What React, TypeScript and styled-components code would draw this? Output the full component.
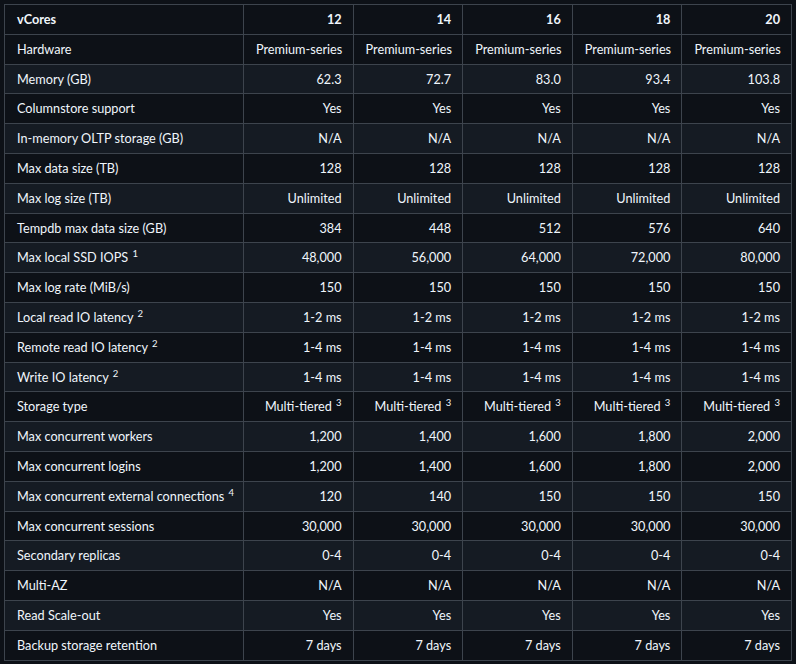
import React from "react";
import styled, { createGlobalStyle } from "styled-components";

const GlobalStyle = createGlobalStyle`
  html, body {
    margin: 0;
    padding: 0;
    background: #0d1117;
  }
  body {
    padding: 4px 5px 4px 4px;
    font-family: Lato, "Noto Sans", sans-serif;
    color: #f0f6fc;
  }
`;

const Table = styled.table`
  width: 788px;
  border-collapse: collapse;
  border-spacing: 0;
  table-layout: fixed;
  font-size: 12.7px;
  line-height: 18.8px;
`;

const Row = styled.tr`
  background: #0d1117;
  &:nth-child(2n) {
    background: #151b23;
  }
`;

const HeadCell = styled.th<{ $first?: boolean }>`
  border: 1px solid #3d444d;
  padding: 5px 11px 5px 12px;
  font-weight: 700;
  text-align: ${(p) => (p.$first ? "left" : "right")};
  white-space: nowrap;
`;

const Cell = styled.td<{ $first?: boolean }>`
  border: 1px solid #3d444d;
  padding: 5px 11px 5px 12px;
  text-align: ${(p) => (p.$first ? "left" : "right")};
  white-space: nowrap;
`;

const Sup = styled.sup`
  font-size: 9.5px;
  line-height: 0;
  vertical-align: 5px;
  margin-left: 1px;
`;

type Val = string | [string, string];

const vcores = ["12", "14", "16", "18", "20"];

const rows: { label: string; note?: string; values: Val[] }[] = [
  { label: "Hardware", values: Array(5).fill("Premium-series") },
  { label: "Memory (GB)", values: ["62.3", "72.7", "83.0", "93.4", "103.8"] },
  { label: "Columnstore support", values: Array(5).fill("Yes") },
  { label: "In-memory OLTP storage (GB)", values: Array(5).fill("N/A") },
  { label: "Max data size (TB)", values: Array(5).fill("128") },
  { label: "Max log size (TB)", values: Array(5).fill("Unlimited") },
  { label: "Tempdb max data size (GB)", values: ["384", "448", "512", "576", "640"] },
  { label: "Max local SSD IOPS", note: "1", values: ["48,000", "56,000", "64,000", "72,000", "80,000"] },
  { label: "Max log rate (MiB/s)", values: Array(5).fill("150") },
  { label: "Local read IO latency", note: "2", values: Array(5).fill("1-2 ms") },
  { label: "Remote read IO latency", note: "2", values: Array(5).fill("1-4 ms") },
  { label: "Write IO latency", note: "2", values: Array(5).fill("1-4 ms") },
  { label: "Storage type", values: Array(5).fill(["Multi-tiered", "3"]) },
  { label: "Max concurrent workers", values: ["1,200", "1,400", "1,600", "1,800", "2,000"] },
  { label: "Max concurrent logins", values: ["1,200", "1,400", "1,600", "1,800", "2,000"] },
  { label: "Max concurrent external connections", note: "4", values: ["120", "140", "150", "150", "150"] },
  { label: "Max concurrent sessions", values: Array(5).fill("30,000") },
  { label: "Secondary replicas", values: Array(5).fill("0-4") },
  { label: "Multi-AZ", values: Array(5).fill("N/A") },
  { label: "Read Scale-out", values: Array(5).fill("Yes") },
  { label: "Backup storage retention", values: Array(5).fill("7 days") },
];

const renderVal = (v: Val) =>
  Array.isArray(v) ? (
    <>
      {v[0]} <Sup>{v[1]}</Sup>
    </>
  ) : (
    v
  );

export default function App() {
  return (
    <>
      <GlobalStyle />
      <Table>
        <colgroup>
          <col style={{ width: 239 }} />
          <col />
          <col />
          <col />
          <col />
          <col />
        </colgroup>
        <thead>
          <Row>
            <HeadCell $first>vCores</HeadCell>
            {vcores.map((v) => (
              <HeadCell key={v}>{v}</HeadCell>
            ))}
          </Row>
        </thead>
        <tbody>
          {rows.map((r) => (
            <Row key={r.label}>
              <Cell $first>
                {r.label}
                {r.note && (
                  <>
                    {" "}
                    <Sup>{r.note}</Sup>
                  </>
                )}
              </Cell>
              {r.values.map((v, i) => (
                <Cell key={i}>{renderVal(v)}</Cell>
              ))}
            </Row>
          ))}
        </tbody>
      </Table>
    </>
  );
}
